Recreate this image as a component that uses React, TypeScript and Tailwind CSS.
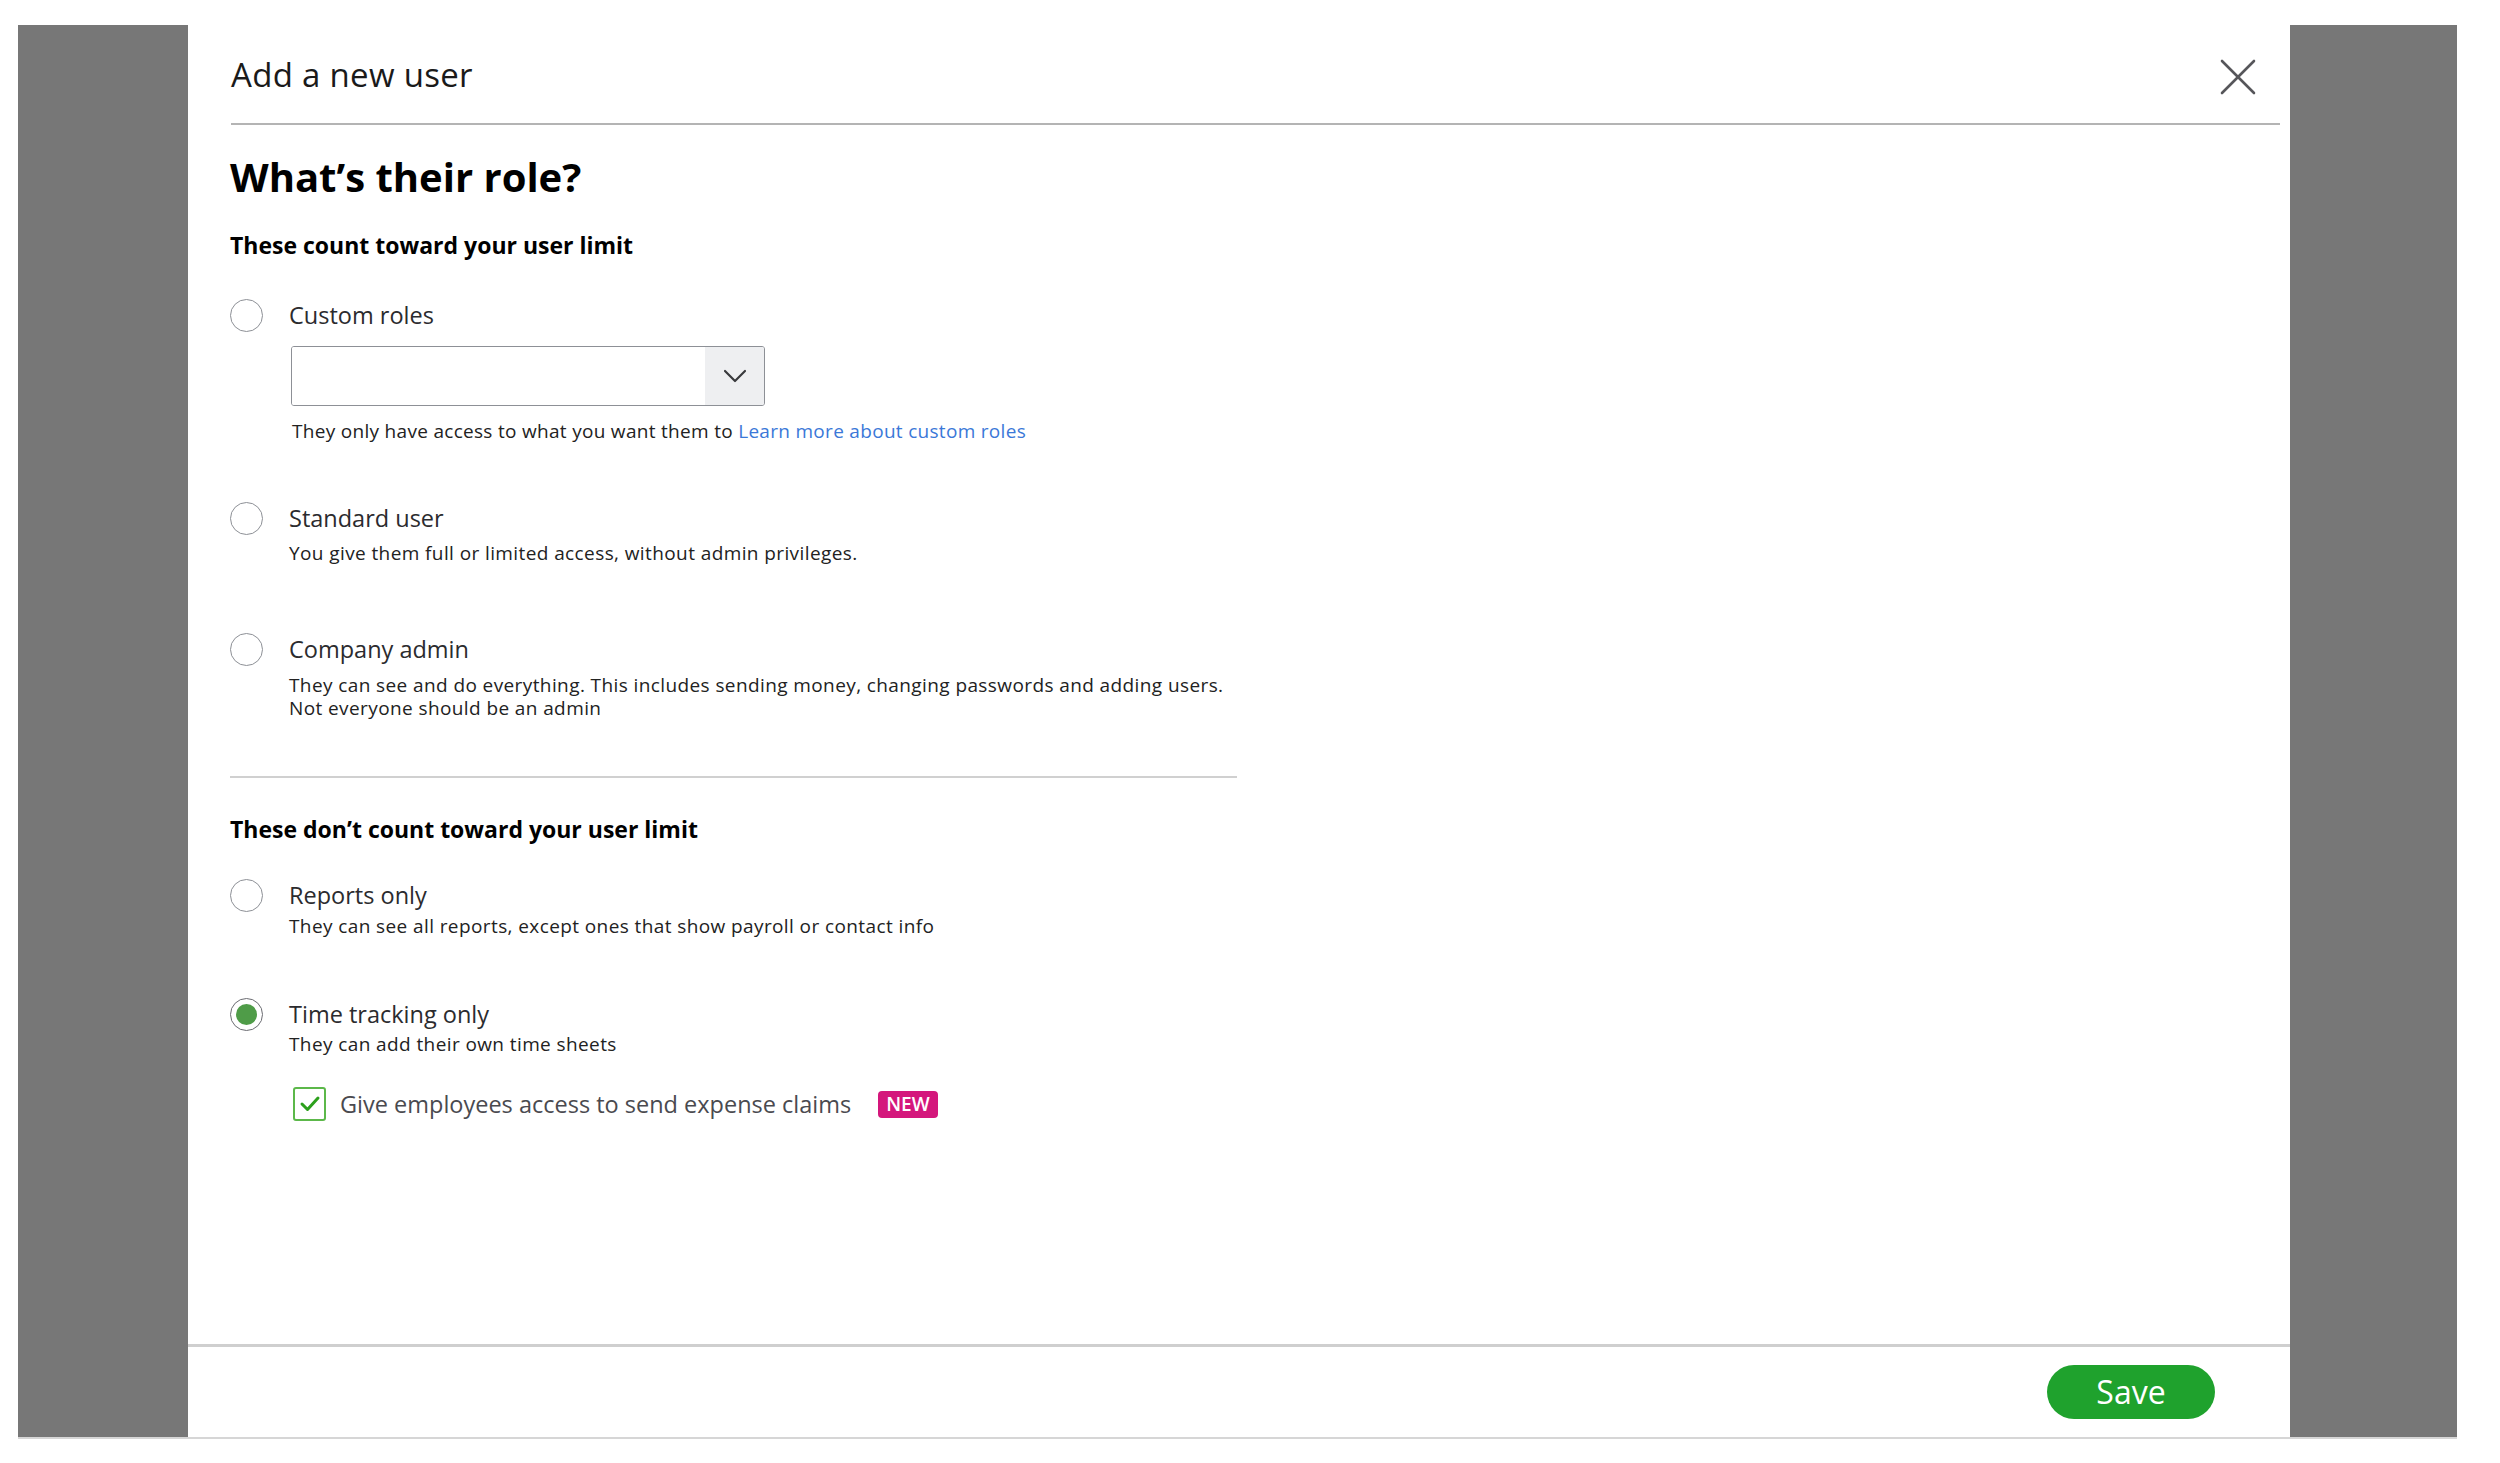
import React from 'react';

const font = { fontFamily: '"Open Sans", "Noto Sans", Arial, sans-serif' };

interface RoleOption {
  key: string;
  label: string;
  lines: string[];
  checked?: boolean;
  descGap: string;
  gapTop: string;
}

const Radio: React.FC<{ checked?: boolean }> = ({ checked }) => (
  <span
    className={`flex h-[33px] w-[33px] shrink-0 items-center justify-center rounded-full border-[1.5px] bg-white ${
      checked ? 'border-[#6b6c72]' : 'border-[#8d9096]'
    }`}
  >
    {checked && <span className="h-[21px] w-[21px] rounded-full bg-[#4f9c48]" />}
  </span>
);

const Option: React.FC<{ option: RoleOption; children?: React.ReactNode }> = ({ option, children }) => (
  <div className={`flex gap-[26px] ${option.gapTop}`}>
    <Radio checked={option.checked} />
    <div className="flex flex-col">
      <div className="text-[23.5px] leading-[33px] text-[#2b2b2e]">{option.label}</div>
      {option.lines.length > 0 && (
        <div className={`${option.descGap} text-[19px] leading-[23px] tracking-[0.4px] text-[#222]`}>
          {option.lines.map((line) => (
            <div key={line}>{line}</div>
          ))}
        </div>
      )}
      {children}
    </div>
  </div>
);

const countedOptions: RoleOption[] = [
  {
    key: 'standard',
    label: 'Standard user',
    lines: ['You give them full or limited access, without admin privileges.'],
    descGap: 'mt-[7px]',
    gapTop: 'mt-[59px]'
  },
  {
    key: 'admin',
    label: 'Company admin',
    lines: [
      'They can see and do everything. This includes sending money, changing passwords and adding users.',
      'Not everyone should be an admin'
    ],
    descGap: 'mt-[8px]',
    gapTop: 'mt-[68px]'
  }
];

const freeOptions: RoleOption[] = [
  {
    key: 'reports',
    label: 'Reports only',
    lines: ['They can see all reports, except ones that show payroll or contact info'],
    descGap: 'mt-[3px]',
    gapTop: 'mt-[35px]'
  },
  {
    key: 'time',
    label: 'Time tracking only',
    lines: ['They can add their own time sheets'],
    checked: true,
    descGap: 'mt-[2px]',
    gapTop: 'mt-[60px]'
  }
];

export default function App() {
  return (
    <div className="h-[1463px] w-[2500px] overflow-hidden bg-white" style={font}>
      <div className="ml-[18px] mt-[25px] flex h-[1414px] w-[2439px] border-b-2 border-[#d6d6d6]">
        <div className="w-[170px] shrink-0 bg-[#777777]" />

        <div className="flex min-w-0 flex-1 flex-col bg-white">
          {/* header */}
          <div className="relative ml-[43px] mr-[10px] border-b-2 border-[#b4b4b4] pt-[31px] pb-[29px]">
            <h1 className="text-[33px] font-medium leading-[38px] tracking-[0.3px] text-[#1a1a1a]">Add a new user</h1>
            <button className="absolute right-[24px] top-[34px] flex h-[36px] w-[36px] items-center justify-center">
              <svg width="36" height="36" viewBox="0 0 36 36" fill="none" stroke="#56565a" strokeWidth="2.6" strokeLinecap="round">
                <line x1="2" y1="2" x2="34" y2="34" />
                <line x1="34" y1="2" x2="2" y2="34" />
              </svg>
            </button>
          </div>

          {/* body */}
          <div className="flex-1 pl-[42px]">
            <div className="w-[1008px]">
              <h2 className="mt-[28px] text-[40px] font-bold leading-[48px] text-black">What’s their role?</h2>
              <h3 className="mt-[30px] text-[23px] font-bold leading-[29px] text-black">These count toward your user limit</h3>

              <div className="mt-[39px] flex gap-[26px]">
                <Radio />
                <div className="flex flex-col">
                  <div className="text-[23.5px] leading-[33px] text-[#2b2b2e]">Custom roles</div>
                  <div className="ml-[2px] mt-[14px] flex h-[60px] w-[474px] overflow-hidden rounded-[3px] border-[1.5px] border-[#8d9096]">
                    <div className="flex-1 bg-white" />
                    <div className="flex w-[59px] items-center justify-center bg-[#eeeff1]">
                      <svg width="24" height="14" viewBox="0 0 24 14" fill="none" stroke="#393a3d" strokeWidth="2.2" strokeLinecap="round" strokeLinejoin="round">
                        <polyline points="2,2 12,12 22,2" />
                      </svg>
                    </div>
                  </div>
                  <div className="ml-[3px] mt-[14px] text-[19px] leading-[23px] tracking-[0.3px] text-[#222]">
                    They only have access to what you want them to{' '}
                    <a className="text-[#3b78d8]">Learn more about custom roles</a>
                  </div>
                </div>
              </div>

              {countedOptions.map((option) => (
                <Option key={option.key} option={option} />
              ))}

              <div className="mt-[56px] h-[2px] w-[1007px] bg-[#d0d0d0]" />

              <h3 className="mt-[37px] text-[23px] font-bold leading-[29px] text-black">These don’t count toward your user limit</h3>

              {freeOptions.map((option) => (
                <Option key={option.key} option={option}>
                  {option.checked && (
                    <div className="ml-[4px] mt-[31px] flex items-center">
                      <span className="flex h-[34px] w-[33px] items-center justify-center rounded-[3px] border-2 border-[#5cb84a] bg-white">
                        <svg width="22" height="18" viewBox="0 0 22 18" fill="none" stroke="#2ca01c" strokeWidth="3" strokeLinecap="round" strokeLinejoin="round">
                          <polyline points="3,9 8.5,14.5 19,3" />
                        </svg>
                      </span>
                      <span className="ml-[14px] text-[23.5px] leading-[33px] text-[#4a4a4f]">
                        Give employees access to send expense claims
                      </span>
                      <span className="ml-[27px] flex h-[27px] items-center rounded-[4px] bg-[#d4177c] px-[8px] text-[19px] font-semibold leading-none text-white">
                        NEW
                      </span>
                    </div>
                  )}
                </Option>
              ))}
            </div>
          </div>

          {/* footer */}
          <div className="flex justify-end border-t-[3px] border-[#cfcfcf] pt-[18px] pb-[18px] pr-[75px]">
            <button className="flex h-[54px] w-[168px] items-center justify-center rounded-full bg-[#1fa22d] text-[32px] leading-none text-white">
              Save
            </button>
          </div>
        </div>

        <div className="w-[167px] shrink-0 bg-[#777777]" />
      </div>
    </div>
  );
}
